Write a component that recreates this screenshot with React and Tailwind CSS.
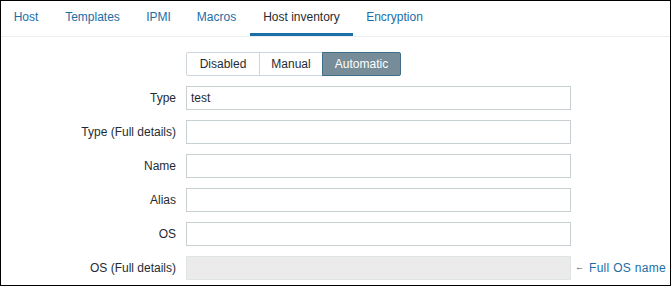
import React from "react";

const tabs = [
  { name: "Host", w: "w-[50px]" },
  { name: "Templates", w: "w-[83px]" },
  { name: "IPMI", w: "w-[49px]" },
  { name: "Macros", w: "w-[67px]" },
  { name: "Host inventory", w: "w-[103px]", active: true },
  { name: "Encryption", w: "w-[83px]" },
];

const rows = [
  { label: "Type", value: "test" },
  { label: "Type (Full details)", value: "" },
  { label: "Name", value: "" },
  { label: "Alias", value: "" },
  { label: "OS", value: "" },
  { label: "OS (Full details)", value: "", disabled: true, hint: "Full OS name" },
];

export default function App() {
  return (
    <div
      className="w-[671px] h-[286px] border border-black bg-white text-[12px] text-[#1f2c33] overflow-hidden"
      style={{ fontFamily: '"Liberation Sans", Arial, sans-serif' }}
    >
      {/* Tabs */}
      <div className="flex h-[36px] border-b border-[#ebeef0]">
        {tabs.map((t) => (
          <div
            key={t.name}
            className={
              "flex items-center justify-center shrink-0 h-full border-b-[3px] " +
              t.w +
              " " +
              (t.active ? "border-[#1b6ea6] text-[#1f2c33]" : "border-transparent text-[#1b6ea6]")
            }
          >
            {t.name}
          </div>
        ))}
      </div>

      {/* Form */}
      <div className="flex flex-col gap-[10px] pt-[15px]">
        <div className="flex items-center gap-[10px]">
          <div className="w-[175px] shrink-0" />
          <div className="flex h-[24px]">
            <div className="flex items-center justify-center w-[74px] border border-[#cfd7dc] rounded-l-[2px]">
              Disabled
            </div>
            <div className="flex items-center justify-center w-[64px] -ml-px border border-[#cfd7dc]">
              Manual
            </div>
            <div className="flex items-center justify-center w-[79px] -ml-px border border-[#3f6d8a] bg-[#768d99] text-white rounded-r-[2px]">
              Automatic
            </div>
          </div>
        </div>

        {rows.map((r) => (
          <div key={r.label} className="flex items-center gap-[10px]">
            <label className="w-[175px] shrink-0 text-right">{r.label}</label>
            <div
              className={
                "w-[385px] h-[24px] border flex items-center px-[4px] " +
                (r.disabled ? "bg-[#ebebeb] border-[#dfe4e7]" : "bg-white border-[#c9d0d4]")
              }
            >
              {r.value}
            </div>
            {r.hint && (
              <div className="flex items-center gap-[5px] ml-[-6px]">
                <span className="text-[9px] text-[#555]">←</span>
                <span className="text-[#1b6ea6] tracking-[0.3px]">{r.hint}</span>
              </div>
            )}
          </div>
        ))}
      </div>
    </div>
  );
}
